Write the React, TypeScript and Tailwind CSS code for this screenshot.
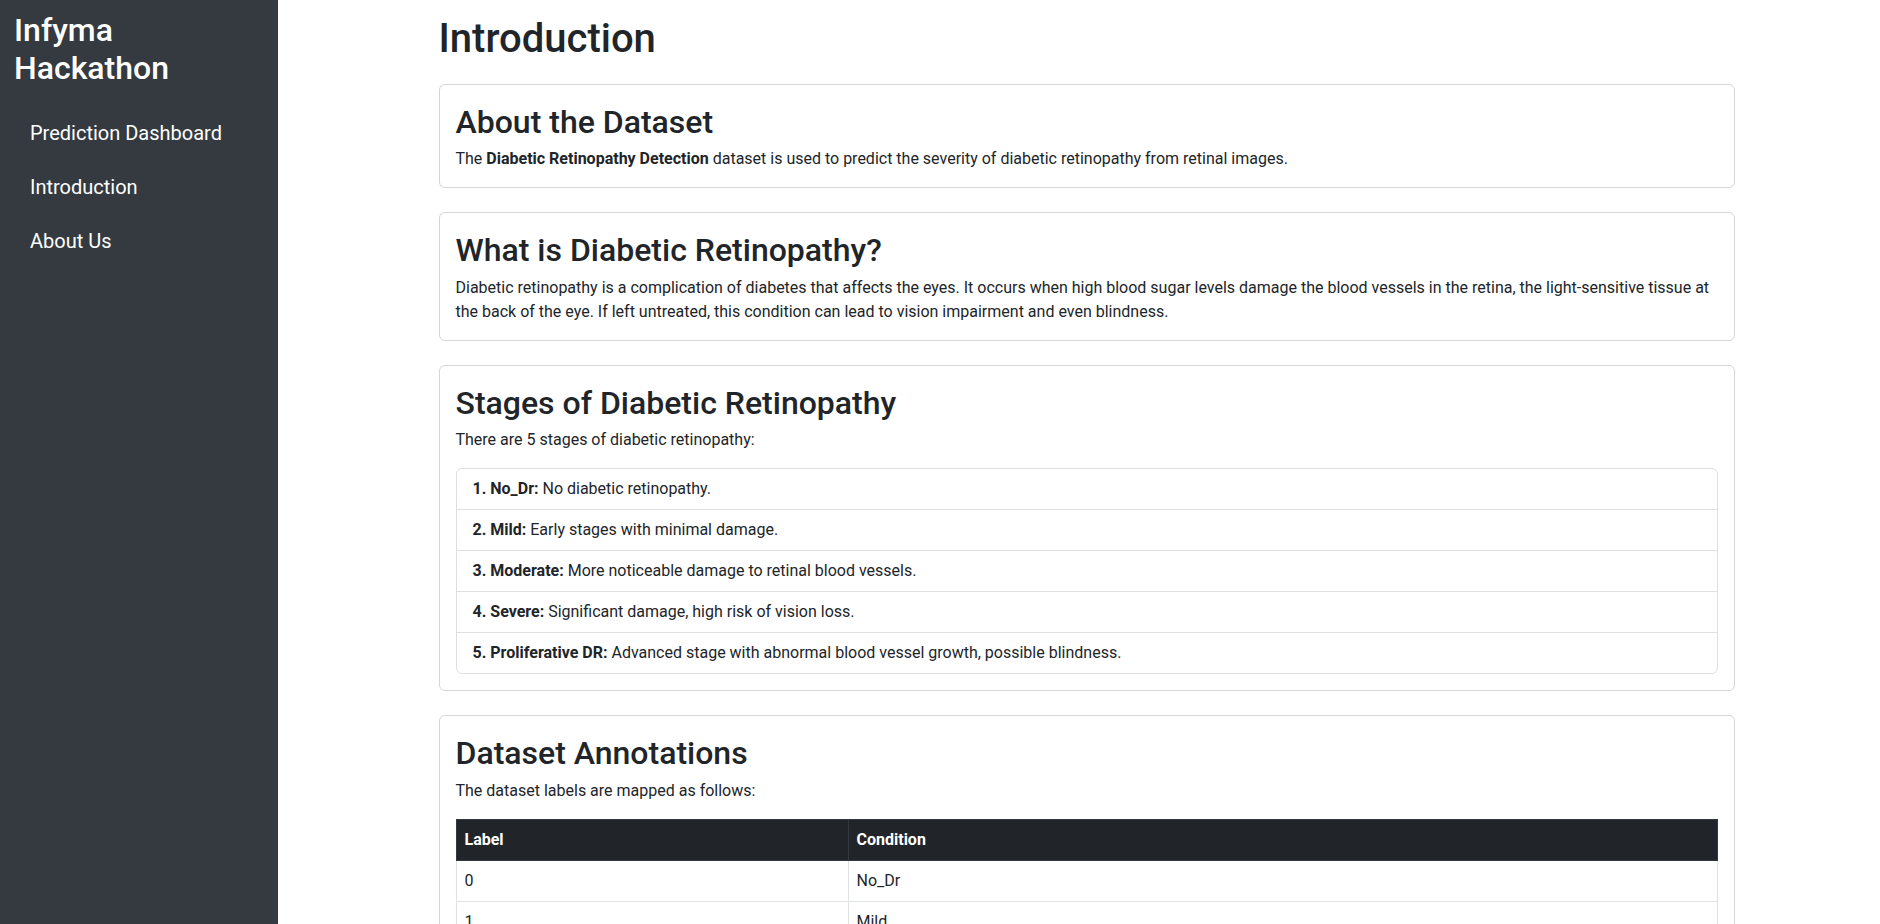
import React from 'react';

const stages = [
    { name: '1. No_Dr:',            text: 'No diabetic retinopathy.' },
    { name: '2. Mild:',             text: 'Early stages with minimal damage.' },
    { name: '3. Moderate:',         text: 'More noticeable damage to retinal blood vessels.' },
    { name: '4. Severe:',           text: 'Significant damage, high risk of vision loss.' },
    { name: '5. Proliferative DR:', text: 'Advanced stage with abnormal blood vessel growth, possible blindness.' },
];

const labels = [
    ['0', 'No_Dr'],
    ['1', 'Mild'],
    ['2', 'Moderate'],
    ['3', 'Severe'],
    ['4', 'Proliferative_DR'],
];

const navItems = ['Prediction Dashboard', 'Introduction', 'About Us'];

function Card({ title, children }: { title: string; children: React.ReactNode }) {
    return (
        <section className="mb-6 rounded-md border border-[#d5d6d7] bg-white p-4">
            <h2 className="mb-[6px] pt-[2px] text-[32px] font-medium leading-[1.2]">{title}</h2>
            {children}
        </section>
    );
}

function Sidebar() {
    return (
        <aside className="w-[278px] shrink-0 bg-[#343a40] px-[14px] pt-[11px] text-white">
            <h2 className="mb-[22px] text-[32px] font-medium leading-[1.2]">Infyma Hackathon</h2>
            <ul className="flex flex-col gap-2">
                {navItems.map(item => (
                    <li key={item}>
                        <a href="#" className="block px-4 py-2 text-[20px] leading-[30px] text-white">
                            {item}
                        </a>
                    </li>
                ))}
            </ul>
        </aside>
    );
}

export default function App() {
    return (
        <div className="flex h-screen overflow-hidden bg-white font-[Roboto,'Noto_Sans',sans-serif] text-base leading-6 text-[#212529]">
            <Sidebar />

            <main className="flex-1 overflow-y-auto pl-[15px] [scrollbar-width:none]">
                <div className="mx-auto w-[1296px] pt-[15px]">
                    <h1 className="mb-[21px] text-[40px] font-medium leading-[1.2]">Introduction</h1>

                    {/* dataset */}
                    <Card title="About the Dataset">
                        <p>
                            The <strong className="font-bold">Diabetic Retinopathy Detection</strong> dataset is used to
                            predict the severity of diabetic retinopathy from retinal images.
                        </p>
                    </Card>

                    <Card title="What is Diabetic Retinopathy?">
                        <p>
                            Diabetic retinopathy is a complication of diabetes that affects the eyes. It occurs when high
                            blood sugar levels damage the blood vessels in the retina, the light-sensitive tissue at the
                            back of the eye. If left untreated, this condition can lead to vision impairment and even
                            blindness.
                        </p>
                    </Card>

                    {/* stages */}
                    <Card title="Stages of Diabetic Retinopathy">
                        <p className="mb-4">There are 5 stages of diabetic retinopathy:</p>
                        <ul className="overflow-hidden rounded-md border border-[#dfdfdf]">
                            {stages.map(s => (
                                <li key={s.name} className="border-t border-[#dfdfdf] px-4 py-2 first:border-t-0">
                                    <strong className="font-bold">{s.name}</strong> {s.text}
                                </li>
                            ))}
                        </ul>
                    </Card>

                    {/* annotations */}
                    <Card title="Dataset Annotations">
                        <p className="mb-4">The dataset labels are mapped as follows:</p>
                        <table className="mb-4 w-full border-collapse text-left">
                            <thead>
                                <tr className="bg-[#212529] text-white">
                                    <th className="w-[392px] border border-[#32383e] p-2 font-bold">Label</th>
                                    <th className="border border-[#32383e] p-2 font-bold">Condition</th>
                                </tr>
                            </thead>
                            <tbody>
                                {labels.map(([l, c]) => (
                                    <tr key={l}>
                                        <td className="border border-[#dee2e6] p-2">{l}</td>
                                        <td className="border border-[#dee2e6] p-2">{c}</td>
                                    </tr>
                                ))}
                            </tbody>
                        </table>
                    </Card>
                </div>
            </main>
        </div>
    );
}
